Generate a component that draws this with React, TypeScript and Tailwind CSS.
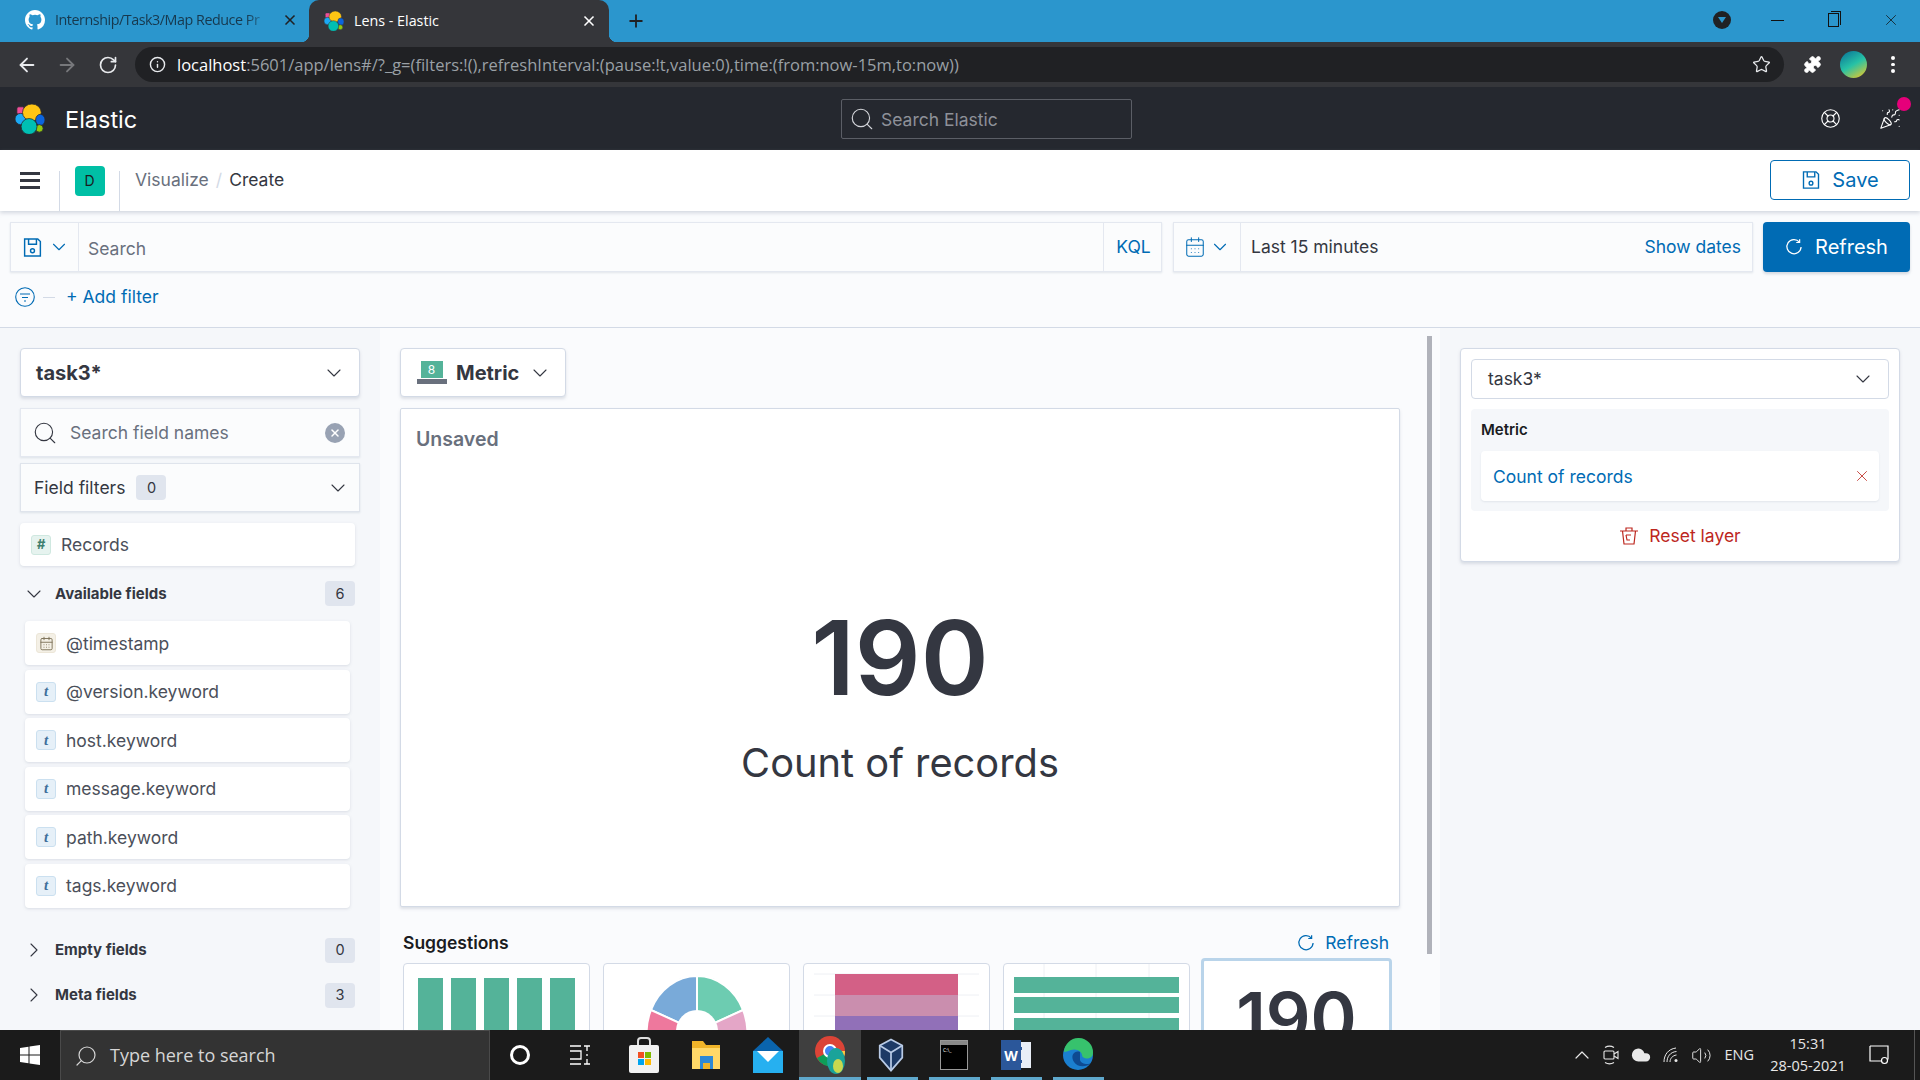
import React from 'react'
import { ArrowLeft, ArrowRight, RotateCw, Star, Puzzle, LifeBuoy, PartyPopper, Search, ChevronDown, ChevronRight, CalendarDays, X, Info, Plus, ChevronUp, Cloud, Volume2 } from 'lucide-react'

const ElasticLogo = ({ size = 30, gap = '#25282f' }: { size?: number; gap?: string }) => (
  <svg width={size} height={size} viewBox="0 0 32 32" stroke={gap} strokeWidth="0.8">
    <rect x="2" y="3" width="8" height="8" rx="2" fill="#f04e98" />
    <ellipse cx="6" cy="16" rx="6" ry="6" fill="#1ba9f5" />
    <ellipse cx="18" cy="9" rx="10" ry="9" fill="#fec514" />
    <ellipse cx="27" cy="17" rx="5" ry="6" fill="#0b64dd" />
    <ellipse cx="26" cy="26" rx="4" ry="4" fill="#93c90e" />
    <circle cx="15" cy="24" r="8.5" fill="#00bfb3" />
  </svg>
)

const RefreshIcon = ({ size = 18 }: { size?: number }) => (
  <svg width={size} height={size} viewBox="0 0 16 16" fill="none" stroke="currentColor" strokeWidth="1.1">
    <path d="M12.8 3.6A6.3 6.3 0 1 0 14.3 8" />
    <path d="M13 1v3h-3" />
  </svg>
)

const SaveIcon = ({ size = 18 }: { size?: number }) => (
  <svg width={size} height={size} viewBox="0 0 16 16" fill="none" stroke="currentColor" strokeWidth="1.1">
    <path d="M2 1.5h10l2 2v11H2z" />
    <path d="M5 1.5v4h6v-4" />
    <circle cx="8" cy="10.5" r="1.5" />
  </svg>
)

const FieldIcon = ({ type }: { type: string }) => {
  if (type === 'number') {
    return (
      <span className="flex h-5 w-5 items-center justify-center rounded-[3px] border border-[#cfe8e0] bg-[#e6f3ef] text-[13px] font-bold italic text-[#3e7f6e]">#</span>
    )
  }
  if (type === 'date') {
    return (
      <span className="flex h-5 w-5 items-center justify-center rounded-[3px] border border-[#ece6d8] bg-[#f4f0e6] text-[#7d7259]">
        <CalendarDays size={15} strokeWidth={1.5} />
      </span>
    )
  }
  return (
    <span className="flex h-5 w-5 items-center justify-center rounded-[3px] border border-[#cbe0f0] bg-[#e6f0f8] font-[family-name:'Liberation_Serif',serif] text-[15px] font-bold italic text-[#3f6f9b]">t</span>
  )
}

const FieldRow = ({ type, name }: { type: string; name: string }) => (
  <div className="flex h-[44px] w-[325px] items-center gap-[10px] rounded-[4px] bg-white pl-[11px] text-[17.5px] text-[#4b4f5a] shadow-[0_1px_3px_rgba(152,162,179,0.3)]">
    <FieldIcon type={type} />
    <span className="mt-[2px]">{name}</span>
  </div>
)

const Badge = ({ value }: { value: string }) => (
  <span className="flex h-[25px] w-[30px] items-center justify-center rounded-[4px] bg-[#e0e5ee] text-[14.5px] text-[#343741]">{value}</span>
)

const FieldGroup = ({ label, count, open }: { label: string; count: string; open?: boolean }) => (
  <div className="flex h-[25px] w-[335px] items-center text-[#343741]">
    <span className="flex w-[35px] pl-[2px]">
      {open ? <ChevronDown size={24} strokeWidth={1.1} /> : <ChevronRight size={24} strokeWidth={1.1} />}
    </span>
    <span className="mt-[1px] flex-1 text-[15px] font-bold">{label}</span>
    <Badge value={count} />
  </div>
)

const Sidebar = () => (
  <div className="flex w-[380px] shrink-0 flex-col bg-[#f5f7fa] pl-[20px] pt-[20px]">
    <div className="flex h-[49px] w-[340px] items-center justify-between rounded-[4px] border border-[#d3dae6] bg-white pl-[15px] pr-[13px] shadow-[0_2px_3px_rgba(152,162,179,0.3)]">
      <span className="text-[20px] font-bold text-[#343741]">task3*</span>
      <ChevronDown size={24} strokeWidth={1.1} className="text-[#343741]" />
    </div>
    <div className="mt-[11px] flex h-[49px] w-[340px] items-center border border-[#e4e8f0] bg-[#fbfcfd] pl-[11px] pr-[14px] shadow-[0_1px_2px_rgba(152,162,179,0.25)]">
      <Search size={26} strokeWidth={1.05} className="text-[#343741]" />
      <span className="ml-[12px] mt-[2px] flex-1 text-[17.5px] text-[#69707d]">Search field names</span>
      <span className="flex h-5 w-5 items-center justify-center rounded-full bg-[#98a2b3] text-white">
        <X size={12} strokeWidth={3} />
      </span>
    </div>
    <div className="mt-[6px] flex h-[49px] w-[340px] items-center border border-[#dfe4ec] bg-[#fbfcfd] pl-[13px] pr-[9px] text-[17.5px] text-[#343741] shadow-[0_1px_2px_rgba(152,162,179,0.25)]">
      <span className="mt-[2px]">Field filters</span>
      <span className="ml-[11px] flex-1">
        <Badge value="0" />
      </span>
      <ChevronDown size={24} strokeWidth={1.1} />
    </div>
    <div className="mt-[11px] flex h-[43px] w-[335px] items-center gap-[10px] rounded-[4px] bg-white pl-[11px] text-[17.5px] text-[#4b4f5a] shadow-[0_1px_3px_rgba(152,162,179,0.3)]">
      <FieldIcon type="number" />
      <span className="mt-[2px]">Records</span>
    </div>
    <div className="mt-[15px]">
      <FieldGroup label="Available fields" count="6" open />
    </div>
    <div className="ml-[5px] mt-[15px] flex flex-col gap-[4.5px]">
      <FieldRow type="date" name="@timestamp" />
      <FieldRow type="text" name="@version.keyword" />
      <FieldRow type="text" name="host.keyword" />
      <FieldRow type="text" name="message.keyword" />
      <FieldRow type="text" name="path.keyword" />
      <FieldRow type="text" name="tags.keyword" />
    </div>
    <div className="mt-[30px]">
      <FieldGroup label="Empty fields" count="0" />
    </div>
    <div className="mt-[20px]">
      <FieldGroup label="Meta fields" count="3" />
    </div>
  </div>
)

const SuggestionCard = ({ children }: { children: React.ReactNode }) => (
  <div className="mt-[5px] h-[110px] w-[187px] shrink-0 overflow-hidden rounded-[4px] border border-[#d3dae6] bg-white">{children}</div>
)

const Suggestions = () => (
  <div className="mt-[25px]">
    <div className="flex h-[22px] items-center justify-between pl-[3px] pr-[11px]">
      <span className="text-[17.5px] font-semibold text-[#1a1c21]">Suggestions</span>
      <span className="flex items-center gap-[10px] text-[17.5px] text-[#006bb4]">
        <RefreshIcon />
        Refresh
      </span>
    </div>
    <div className="ml-[3px] mt-[4px] flex gap-[13px]">
      <SuggestionCard>
        <svg width="185" height="108">
          {[14, 47, 80, 113, 146].map((x) => (
            <rect key={x} x={x} y="14" width="25" height="94" fill="#54b399" />
          ))}
        </svg>
      </SuggestionCard>
      <SuggestionCard>
        <svg width="185" height="108" stroke="#fff" strokeWidth="2">
          <path d="M93 12A50 55 0 0 1 139 46L93 67z" fill="#6dccb1" />
          <path d="M93 12A50 55 0 0 0 47 46L93 67z" fill="#79aad9" />
          <path d="M139 46A50 55 0 0 1 139 90L93 67z" fill="#e4a6c7" />
          <path d="M47 46A50 55 0 0 0 47 90L93 67z" fill="#ee789d" />
          <circle cx="93" cy="67" r="21" fill="#fff" stroke="none" />
        </svg>
      </SuggestionCard>
      <SuggestionCard>
        <svg width="185" height="108">
          <path d="M10 10H175M10 31H175M10 52H175" stroke="#eef0f4" />
          <rect x="31" y="10" width="123" height="21" fill="#d36086" />
          <rect x="31" y="31" width="123" height="21" fill="#ca8eae" />
          <rect x="31" y="52" width="123" height="56" fill="#9170b8" />
        </svg>
      </SuggestionCard>
      <SuggestionCard>
        <svg width="185" height="108">
          <path d="M40 0V108M92 0V108M145 0V108" stroke="#eef0f4" />
          <rect x="10" y="13" width="165" height="16" fill="#54b399" />
          <rect x="10" y="33" width="165" height="16" fill="#54b399" />
          <rect x="10" y="54" width="165" height="54" fill="#54b399" />
        </svg>
      </SuggestionCard>
      <div className="-ml-[2px] h-[115px] w-[191px] shrink-0 rounded-[4px] border-[3px] border-[#b9d4ea] bg-white pt-[14px] text-center text-[70px] font-semibold leading-[86px] text-[#343741]">
        190
      </div>
    </div>
  </div>
)

const Workspace = () => (
  <div className="flex w-[1060px] shrink-0 bg-[#fafbfd] pl-[20px] pt-[20px]">
    <div className="w-[1000px] shrink-0">
      <div className="flex h-[49px] w-[166px] items-center rounded-[4px] border border-[#d3dae6] bg-white pl-[15px] shadow-[0_2px_3px_rgba(152,162,179,0.3)]">
        <span className="flex w-[31px] flex-col items-center">
          <span className="flex h-[17px] w-[22px] items-center justify-center bg-[#54b399] text-[12px] leading-none text-white">8</span>
          <span className="mt-[1px] h-[5px] w-[30px] bg-[#69707d]" />
        </span>
        <span className="ml-[9px] text-[20px] font-bold text-[#343741]">Metric</span>
        <ChevronDown size={24} strokeWidth={1.1} className="ml-[9px] text-[#343741]" />
      </div>
      <div className="mt-[11px] h-[499px] rounded-[2px] border border-[#d3dae6] bg-white pl-[15px] pt-[16px] shadow-[0_2px_3px_rgba(152,162,179,0.3)]">
        <div className="text-[19.5px] font-semibold text-[#69707d]">Unsaved</div>
        <div className="mr-[15px] mt-[144px] text-center text-[103px] font-semibold leading-[120px] text-[#343741]">190</div>
        <div className="mr-[15px] mt-[20px] text-center text-[39.8px] leading-[50px] text-[#343741]">Count of records</div>
      </div>
      <Suggestions />
    </div>
    <div className="ml-[27px] mt-[-12px] h-[618px] w-[5px] shrink-0 bg-[#b0b2ba]" />
  </div>
)

const ConfigPanel = () => (
  <div className="flex-1 bg-[#f5f7fa] pl-[20px] pt-[20px]">
    <div className="h-[214px] w-[440px] rounded-[4px] border border-[#d3dae6] bg-white px-[10px] pt-[10px] shadow-[0_2px_3px_rgba(152,162,179,0.3)]">
      <div className="flex h-[40px] items-center justify-between rounded-[4px] border border-[#d3dae6] pl-[16px] pr-[13px] text-[17.5px] text-[#343741]">
        <span>task3*</span>
        <ChevronDown size={24} strokeWidth={1.1} />
      </div>
      <div className="mt-[10px] h-[102px] rounded-[4px] bg-[#f5f7fa] px-[10px] pt-[10px]">
        <div className="text-[15px] font-semibold leading-[22px] text-[#1a1c21]">Metric</div>
        <div className="mt-[10px] flex h-[50px] items-center justify-between rounded-[4px] bg-white pl-[12px] pr-[8px] text-[17.5px] text-[#006bb4] shadow-[0_1px_2px_rgba(152,162,179,0.2)]">
          <span className="mt-[2px]">Count of records</span>
          <X size={18} strokeWidth={1.1} className="text-[#bd271e]" />
        </div>
      </div>
      <div className="mt-[12px] flex items-center justify-center gap-[10px] text-[17.5px] text-[#bd271e]">
        <svg width="20" height="20" viewBox="0 0 20 20" fill="none" stroke="currentColor" strokeWidth="1.2">
          <path d="M1 5H19M7 5V2H13V5M3.5 5L5 18H15L16.5 5M7 9H12M7 9L8 14H11" />
        </svg>
        Reset layer
      </div>
    </div>
  </div>
)

const TaskbarIcon = ({ active, running, children }: { active?: boolean; running?: boolean; children: React.ReactNode }) => (
  <div className={active ? 'relative flex h-full w-[62px] items-center justify-center bg-[#3f3f3f]' : 'relative flex h-full w-[62px] items-center justify-center'}>
    {children}
    {running && <span className={active ? 'absolute bottom-0 h-[3px] w-[62px] bg-[#5fa8cc]' : 'absolute bottom-0 h-[3px] w-[51px] bg-[#5fa8cc]'} />}
  </div>
)

const Taskbar = () => (
  <div className="flex h-[50px] shrink-0 items-center bg-[#1b1b1b] font-[family-name:'Open_Sans',sans-serif] text-white">
    <div className="flex h-full w-[60px] items-center justify-center">
      <svg width="20" height="20" viewBox="0 0 20 20" fill="#fff">
        <path d="M0 3L8.5 1.8V9.5H0zM9.5 1.6L20 0V9.5H9.5zM0 10.5H8.5V18.2L0 17zM9.5 10.5H20V20L9.5 18.4z" />
      </svg>
    </div>
    <div className="flex h-full w-[430px] items-center border-x border-t border-[#4a4a4a] bg-[#333333] pl-[13px] text-[#d6d6d6]">
      <Search size={24} strokeWidth={1.2} className="-scale-x-100" />
      <span className="ml-[12px] text-[18px]">Type here to search</span>
    </div>
    <div className="flex h-full w-[60px] items-center justify-center">
      <span className="h-[20px] w-[20px] rounded-full border-[3px] border-white" />
    </div>
    <div className="mr-[3px] flex h-full w-[60px] items-center justify-center">
      <svg width="22" height="20" viewBox="0 0 22 20" fill="none" stroke="#fff" strokeWidth="1.3">
        <path d="M1 1H12M1 19H12M1 6H12V14H1M18 1V6M18 9V11M18 14V19M15 1H21M15 19H21" />
      </svg>
    </div>
    <TaskbarIcon>
      <svg width="30" height="36" viewBox="0 0 30 36">
        <path d="M9 9V4a3 3 0 0 1 3-3h6a3 3 0 0 1 3 3v5" fill="none" stroke="#ddd" strokeWidth="2" />
        <rect y="8" width="30" height="28" rx="2" fill="#f2f2f2" />
        <rect x="9" y="15" width="6" height="6" fill="#f25022" />
        <rect x="16" y="15" width="6" height="6" fill="#7fba00" />
        <rect x="9" y="22" width="6" height="6" fill="#00a4ef" />
        <rect x="16" y="22" width="6" height="6" fill="#ffb900" />
      </svg>
    </TaskbarIcon>
    <TaskbarIcon>
      <svg width="30" height="30" viewBox="0 0 30 30">
        <path d="M1 1h11l3 4h14v24H1z" fill="#f0b429" />
        <path d="M1 8h28v21H1z" fill="#ffd868" />
        <rect x="9" y="16" width="13" height="13" fill="#2d89d6" />
        <rect x="12" y="23" width="7" height="6" fill="#f0b429" />
      </svg>
    </TaskbarIcon>
    <TaskbarIcon>
      <svg width="30" height="36" viewBox="0 0 30 36">
        <path d="M15 0L30 14V36H0V14z" fill="#0a64ad" />
        <path d="M0 14H30V36H0z" fill="#26b0f0" />
        <path d="M4 14H26L15 25z" fill="#fff" />
      </svg>
    </TaskbarIcon>
    <TaskbarIcon active running>
      <svg width="32" height="40" viewBox="0 0 32 40">
        <circle cx="16" cy="16" r="15" fill="#db4437" />
        <path d="M3 23A15 15 0 0 0 20 31L16 16z" fill="#0f9d58" />
        <path d="M16 16L31 16A15 15 0 0 1 20 31z" fill="#ffcd40" />
        <circle cx="16" cy="16" r="6" fill="#4285f4" stroke="#fff" strokeWidth="2" />
        <ellipse cx="22" cy="26" rx="9" ry="13" fill="#1aa39a" />
        <ellipse cx="24" cy="31" rx="5" ry="7" fill="#c9d84f" />
      </svg>
    </TaskbarIcon>
    <TaskbarIcon running>
      <svg width="26" height="38" viewBox="0 0 30 38" fill="none" stroke="#b9cbe6" strokeWidth="2" className="mr-[3px]">
        <path d="M15 1L28 8V22L15 37L2 22V8z" fill="#1d3a66" />
        <path d="M2 8L15 16L28 8M15 16V37" />
      </svg>
    </TaskbarIcon>
    <TaskbarIcon running>
      <div className="h-[30px] w-[28px] border border-[#999] bg-black">
        <div className="h-[4px] bg-[#888]" />
        <div className="ml-[2px] mt-[2px] text-[5px] leading-[6px] text-white">C:\_</div>
      </div>
    </TaskbarIcon>
    <TaskbarIcon running>
      <div className="relative flex h-[30px] w-[30px] items-center justify-end">
        <div className="h-[26px] w-[22px] bg-[#e9eef7]">
          <div className="mx-[9px] mt-[5px] h-[16px] border-y-[3px] border-[#2b579a]" />
        </div>
        <span className="absolute left-0 flex h-[30px] w-[20px] items-center justify-center bg-[#2b579a] text-[14px] font-bold text-white">W</span>
      </div>
    </TaskbarIcon>
    <TaskbarIcon running>
      <svg width="32" height="34" viewBox="0 0 32 34">
        <circle cx="16" cy="17" r="15" fill="#1b7fcf" />
        <path d="M2 14A14 14 0 0 1 31 15C31 22 20 22 20 17C20 14 15 10 9 12C6 13 3 14 2 14z" fill="#37c26d" />
        <path d="M18 14C12 12 8 18 12 24C15 29 24 30 29 25C26 27 19 26 18 22z" fill="#0e4a91" />
      </svg>
    </TaskbarIcon>
    <div className="ml-auto flex h-full items-center text-[#e8e8e8]">
      <ChevronUp size={24} strokeWidth={1.2} />
      <svg width="16" height="20" viewBox="0 0 16 20" fill="none" stroke="currentColor" strokeWidth="1.1" className="ml-[9px]">
        <path d="M2 2.5C5 .7 8 .7 11 2.5M2 17.5C5 19.3 8 19.3 11 17.5" />
        <rect x="1" y="6" width="10" height="8" rx="1" />
        <path d="M11 9L15 6.5V13.5L11 11" />
      </svg>
      <Cloud size={22} fill="#e8e8e8" strokeWidth={0} className="ml-[11px]" />
      <svg width="16" height="16" viewBox="0 0 16 16" fill="none" stroke="currentColor" strokeWidth="1" className="ml-[11px]">
        <path d="M1 15C1 8 5 2 13 1M4 15C4 10 7 5 13.5 4.5M7 15C7 11.5 9.5 8.5 13.5 8" />
        <circle cx="13" cy="13.5" r="1.5" fill="currentColor" stroke="none" />
      </svg>
      <Volume2 size={21} strokeWidth={1.1} className="ml-[12px]" />
      <span className="ml-[12px] text-[14.5px]">ENG</span>
      <div className="ml-[14px] flex w-[80px] flex-col items-center text-[14.5px] leading-[22px]">
        <span>15:31</span>
        <span>28-05-2021</span>
      </div>
      <svg width="20" height="20" viewBox="0 0 20 20" fill="none" stroke="#fff" strokeWidth="1.2" className="ml-[21px]">
        <path d="M1 1H19V14.5M12 16H1V1" />
        <circle cx="15.5" cy="15.5" r="3" />
      </svg>
      <span className="ml-[25px] h-full w-[6px] border-l border-[#555]" />
    </div>
  </div>
)

const App = () => (
  <div className="flex h-[1080px] w-[1920px] flex-col overflow-hidden bg-[#fafbfd] font-[family-name:Inter,sans-serif]">
    {/* Chrome tabs */}
    <div className="flex h-[42px] shrink-0 items-end bg-[#2b96cd] font-[family-name:'Open_Sans',sans-serif] text-[14.3px]">
      <div className="flex h-full w-[309px] items-center pb-[2px] pl-[25px] text-[#17384d]">
        <svg width="20" height="20" viewBox="0 0 16 16" fill="#fff" className="shrink-0">
          <path d="M8 0C3.58 0 0 3.58 0 8c0 3.54 2.29 6.53 5.47 7.59.4.07.55-.17.55-.38v-1.34c-2.23.48-2.7-1.07-2.7-1.07-.36-.92-.89-1.17-.89-1.17-.73-.5.05-.49.05-.49.8.06 1.23.82 1.23.82.72 1.22 1.87.87 2.33.66.07-.52.28-.87.51-1.07-1.78-.2-3.64-.89-3.64-3.95 0-.87.31-1.59.82-2.15-.08-.2-.36-1.02.08-2.12 0 0 .67-.21 2.2.82a7.6 7.6 0 0 1 4 0c1.53-1.04 2.2-.82 2.2-.82.44 1.1.16 1.92.08 2.12.51.56.82 1.27.82 2.15 0 3.07-1.87 3.75-3.65 3.95.29.25.54.73.54 1.48v2.2c0 .21.15.46.55.38A8 8 0 0 0 16 8c0-4.42-3.58-8-8-8z" />
        </svg>
        <span className="ml-[10px] w-[217px] whitespace-nowrap tracking-[-0.45px] [mask-image:linear-gradient(to_right,#000_88%,transparent)]">Internship/Task3/Map Reduce Pr</span>
        <X size={16} strokeWidth={2.5} className="ml-[10px] shrink-0 text-[#202124]" />
      </div>
      <div className="relative flex h-[42px] w-[300px] items-center rounded-t-[10px] bg-[#35363a] pl-[15px] text-white">
        <span className="absolute -left-[8px] bottom-0 h-[8px] w-[8px] bg-[radial-gradient(circle_at_0_0,transparent_8px,#35363a_8.5px)]" />
        <span className="absolute -right-[8px] bottom-0 h-[8px] w-[8px] bg-[radial-gradient(circle_at_100%_0,transparent_8px,#35363a_8.5px)]" />
        <ElasticLogo size={20} gap="#35363a" />
        <span className="ml-[10px] flex-1">Lens - Elastic</span>
        <X size={16} strokeWidth={2.5} className="mr-[12px]" />
      </div>
      <Plus size={20} strokeWidth={2.2} className="mb-[11px] ml-[17px] text-[#202124]" />
      <div className="ml-auto flex h-full items-center pb-[2px] text-[#111]">
        <span className="flex h-[18px] w-[18px] items-center justify-center rounded-full bg-[#202124]">
          <span className="h-0 w-0 border-x-[4px] border-t-[6px] border-x-transparent border-t-[#2b96cd]" />
        </span>
        <span className="ml-[40px] h-px w-[13px] bg-[#111]" />
        <span className="relative ml-[44px] h-[14px] w-[11px] border border-[#111]">
          <span className="absolute -right-[3px] -top-[3px] h-[14px] w-[10px] border-r border-t border-[#111]" />
        </span>
        <X size={18} strokeWidth={1} className="ml-[43px] mr-[20px]" />
      </div>
    </div>

    {/* Chrome toolbar */}
    <div className="flex h-[45px] shrink-0 items-center bg-[#35363a] pl-[16px]">
      <ArrowLeft size={22} strokeWidth={2} className="text-[#e8eaed]" />
      <ArrowRight size={22} strokeWidth={2} className="ml-[18px] text-[#77787b]" />
      <RotateCw size={20} strokeWidth={2} className="ml-[20px] text-[#e8eaed]" />
      <div className="ml-[17px] flex h-[35px] w-[1649px] items-center rounded-full bg-[#202124] pl-[14px] pr-[13px] font-[family-name:'Open_Sans',sans-serif] text-[16.5px]">
        <Info size={17} strokeWidth={2} className="text-[#e8eaed]" />
        <span className="ml-[11px] mt-[2px] flex-1 whitespace-nowrap text-[#9aa0a6]">
          <span className="text-white">localhost</span>:5601/app/lens#/?_g=(filters:!(),refreshInterval:(pause:!t,value:0),time:(from:now-15m,to:now))
        </span>
        <Star size={19} strokeWidth={1.6} className="text-[#e8eaed]" />
      </div>
      <Puzzle size={19} fill="#fff" strokeWidth={1} className="ml-[19px] text-white" />
      <span className="ml-[18px] h-[27px] w-[27px] rounded-full bg-[linear-gradient(150deg,#0e7f9a_10%,#27c2a6_50%,#e6c82a_95%)]" />
      <div className="ml-[24px] flex flex-col gap-[3px]">
        <span className="h-[3.5px] w-[3.5px] rounded-full bg-white" />
        <span className="h-[3.5px] w-[3.5px] rounded-full bg-white" />
        <span className="h-[3.5px] w-[3.5px] rounded-full bg-white" />
      </div>
    </div>

    {/* Elastic header */}
    <div className="flex h-[63px] shrink-0 items-center bg-[#25282f] pl-[15px]">
      <ElasticLogo />
      <span className="ml-[20px] mt-[2px] w-[776px] text-[23.5px] text-white">Elastic</span>
      <div className="flex h-[40px] w-[291px] items-center rounded-[2px] border border-[#5b5e66] pl-[7px] text-[#8e9199]">
        <Search size={26} strokeWidth={1.05} className="text-[#d4d6db]" />
        <span className="ml-[6px] mt-[4px] text-[17.5px]">Search Elastic</span>
      </div>
      <LifeBuoy size={21} strokeWidth={1.3} className="ml-[688px] text-white" />
      <div className="relative ml-[38px]">
        <PartyPopper size={22} strokeWidth={1.2} className="text-white" />
        <span className="absolute -right-[10px] -top-[11px] h-[14px] w-[14px] rounded-full bg-[#e6007a]" />
      </div>
    </div>

    {/* Breadcrumbs */}
    <div className="relative z-10 flex h-[61px] shrink-0 items-center bg-white text-[17.5px] shadow-[0_2px_4px_rgba(152,162,179,0.4)]">
      <div className="flex h-full w-[59px] items-center justify-center">
        <div className="flex flex-col gap-[4.5px]">
          <span className="h-[2.5px] w-[20px] bg-[#343741]" />
          <span className="h-[2.5px] w-[20px] bg-[#343741]" />
          <span className="h-[2.5px] w-[20px] bg-[#343741]" />
        </div>
      </div>
      <span className="h-[40px] w-px self-end bg-[#d3dae6]" />
      <div className="flex h-full w-[59px] items-center justify-center">
        <span className="flex h-[30px] w-[30px] items-center justify-center rounded-[4px] bg-[#00bfa5] text-[14px] text-[#1a1c21]">D</span>
      </div>
      <span className="h-[40px] w-px self-end bg-[#d3dae6]" />
      <span className="ml-[15px] text-[#69707d]">Visualize</span>
      <span className="mx-[7px] text-[#d3dae6]">/</span>
      <span className="text-[#343741]">Create</span>
      <div className="mb-[1px] ml-auto mr-[10px] flex h-[40px] w-[140px] items-center justify-center gap-[11px] rounded-[4px] border border-[#006bb4] text-[20px] text-[#006bb4]">
        <SaveIcon size={20} />
        Save
      </div>
    </div>

    {/* Query bar */}
    <div className="h-[117px] shrink-0 border-b border-[#d3dae6] bg-[#fafbfd] pt-[11px] text-[17.5px]">
      <div className="flex h-[50px] pl-[10px] pr-[10px]">
        <div className="flex w-[1152px] border border-[#e4e8f0] bg-[#fbfcfd] shadow-[0_1px_2px_rgba(152,162,179,0.25)]">
          <div className="flex w-[68px] items-center gap-[5px] border-r border-[#e4e8f0] pl-[11px] text-[#006bb4]">
            <SaveIcon size={21} />
            <ChevronDown size={22} strokeWidth={1.2} />
          </div>
          <span className="flex flex-1 items-center pl-[9px] pt-[4px] text-[#69707d]">Search</span>
          <span className="flex w-[58px] items-center justify-center border-l border-[#e4e8f0] pl-[2px] text-[#006bb4]">KQL</span>
        </div>
        <div className="ml-[11px] flex w-[580px] border border-[#e4e8f0] bg-[#fbfcfd] shadow-[0_1px_2px_rgba(152,162,179,0.25)]">
          <div className="flex w-[67px] items-center gap-[3px] border-r border-[#e4e8f0] pl-[10px] text-[#006bb4]">
            <CalendarDays size={22} strokeWidth={1.1} />
            <ChevronDown size={22} strokeWidth={1.2} />
          </div>
          <span className="flex flex-1 items-center pl-[10px] text-[#343741]">Last 15 minutes</span>
          <span className="flex items-center pr-[11px] text-[#006bb4]">Show dates</span>
        </div>
        <div className="ml-[10px] flex w-[147px] items-center justify-center gap-[12px] rounded-[4px] bg-[#006bb4] text-[20px] text-white shadow-[0_2px_3px_rgba(152,162,179,0.4)]">
          <RefreshIcon />
          Refresh
        </div>
      </div>
      <div className="mt-[10px] flex h-[30px] items-center pl-[15px] text-[#006bb4]">
        <svg width="20" height="20" viewBox="0 0 20 20" fill="none" stroke="currentColor" strokeWidth="1.1">
          <circle cx="10" cy="10" r="9.3" />
          <path d="M5 7H15M7 10.5H13M9 14H11" />
        </svg>
        <span className="ml-[8px] h-px w-[12px] bg-[#d3dae6]" />
        <span className="ml-[11px]">+ Add filter</span>
      </div>
    </div>

    {/* Lens editor */}
    <div className="flex min-h-0 flex-1 overflow-hidden">
      <Sidebar />
      <Workspace />
      <ConfigPanel />
    </div>

    <Taskbar />
  </div>
)

export default App
